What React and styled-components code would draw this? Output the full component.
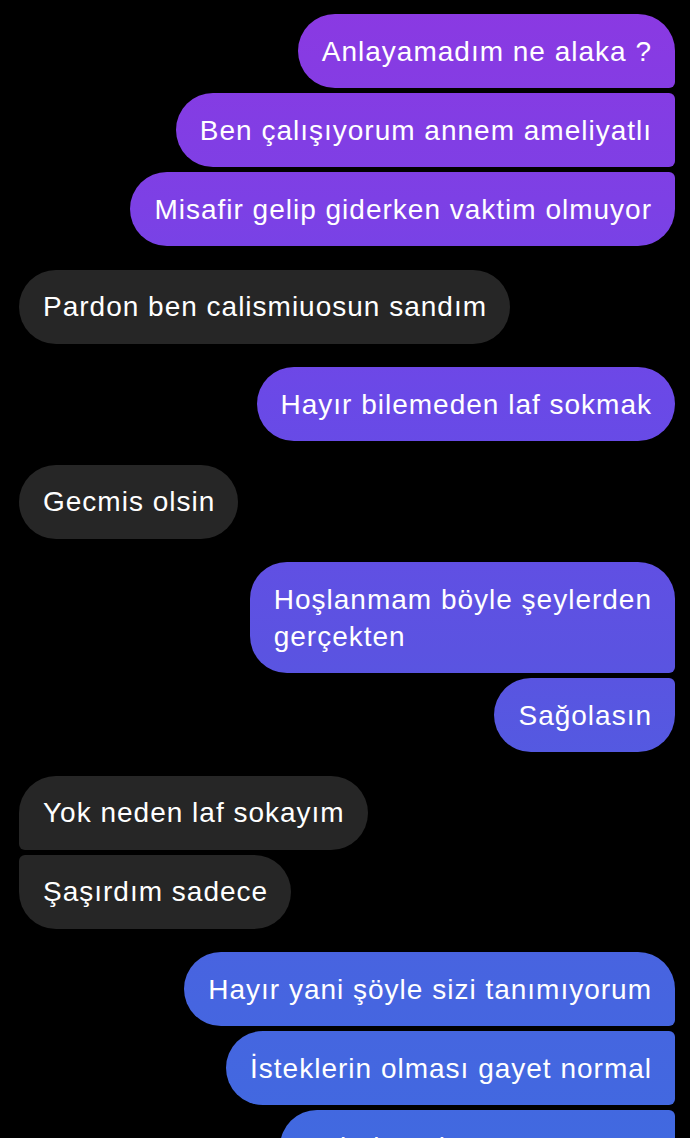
import styled, { createGlobalStyle, css } from "styled-components";

const GlobalStyle = createGlobalStyle`
  html, body {
    margin: 0;
    padding: 0;
    background: #000;
  }
  body {
    font-family: "Liberation Sans", Arial, sans-serif;
    -webkit-font-smoothing: antialiased;
  }
`;

const Thread = styled.div`
  display: flex;
  flex-direction: column;
  gap: 23.5px;
  padding: 14px 15px 0 19px;
  height: 1138px;
  box-sizing: border-box;
  overflow: hidden;
`;

const Group = styled.div`
  display: flex;
  flex-direction: column;
  gap: 5px;
  align-items: ${(p) => (p.$mine ? "flex-end" : "flex-start")};
`;

const BIG = "37px";
const SMALL = "6px";

const corners = (mine, pos) => {
  const top = pos === "single" || pos === "first" ? BIG : SMALL;
  const bottom = pos === "single" || pos === "last" ? BIG : SMALL;
  return mine
    ? `${BIG} ${top} ${bottom} ${BIG}`
    : `${top} ${BIG} ${BIG} ${bottom}`;
};

const Bubble = styled.div`
  max-width: 558px;
  box-sizing: border-box;
  padding: 18.5px 23px 18.5px 24px;
  font-size: 28px;
  letter-spacing: 1px;
  line-height: 37px;
  color: #fff;
  white-space: pre-line;
  border-radius: ${(p) => corners(p.$mine, p.$pos)};
  ${(p) =>
    p.$mine
      ? css`
          background: linear-gradient(
            180deg,
            #8b39e2 0px,
            #7d40e5 200px,
            #6a49e7 400px,
            #5b53e1 650px,
            #4a62e0 900px,
            #4169e0 1138px
          );
          background-attachment: fixed;
        `
      : css`
          background: #262626;
        `}
`;

const groups = [
  {
    mine: true,
    texts: [
      "Anlayamadım ne alaka ?",
      "Ben çalışıyorum annem ameliyatlı",
      "Misafir gelip giderken vaktim olmuyor",
    ],
  },
  { mine: false, texts: ["Pardon ben calismiuosun sandım"] },
  { mine: true, texts: ["Hayır bilemeden laf sokmak"] },
  { mine: false, texts: ["Gecmis olsin"] },
  { mine: true, texts: ["Hoşlanmam böyle şeylerden\ngerçekten", "Sağolasın"] },
  { mine: false, texts: ["Yok neden laf sokayım", "Şaşırdım sadece"] },
  {
    mine: true,
    texts: [
      "Hayır yani şöyle sizi tanımıyorum",
      "İsteklerin olması gayet normal",
      "Kabul etmiyorum ama sen",
    ],
  },
];

const position = (i, n) => {
  if (n === 1) return "single";
  if (i === 0) return "first";
  if (i === n - 1) return "last";
  return "middle";
};

const App = () => {
  return (
    <>
      <GlobalStyle />
      <Thread>
        {groups.map((g, gi) => (
          <Group key={gi} $mine={g.mine}>
            {g.texts.map((t, i) => (
              <Bubble key={i} $mine={g.mine} $pos={position(i, g.texts.length)}>
                {t}
              </Bubble>
            ))}
          </Group>
        ))}
      </Thread>
    </>
  );
};

export default App;
